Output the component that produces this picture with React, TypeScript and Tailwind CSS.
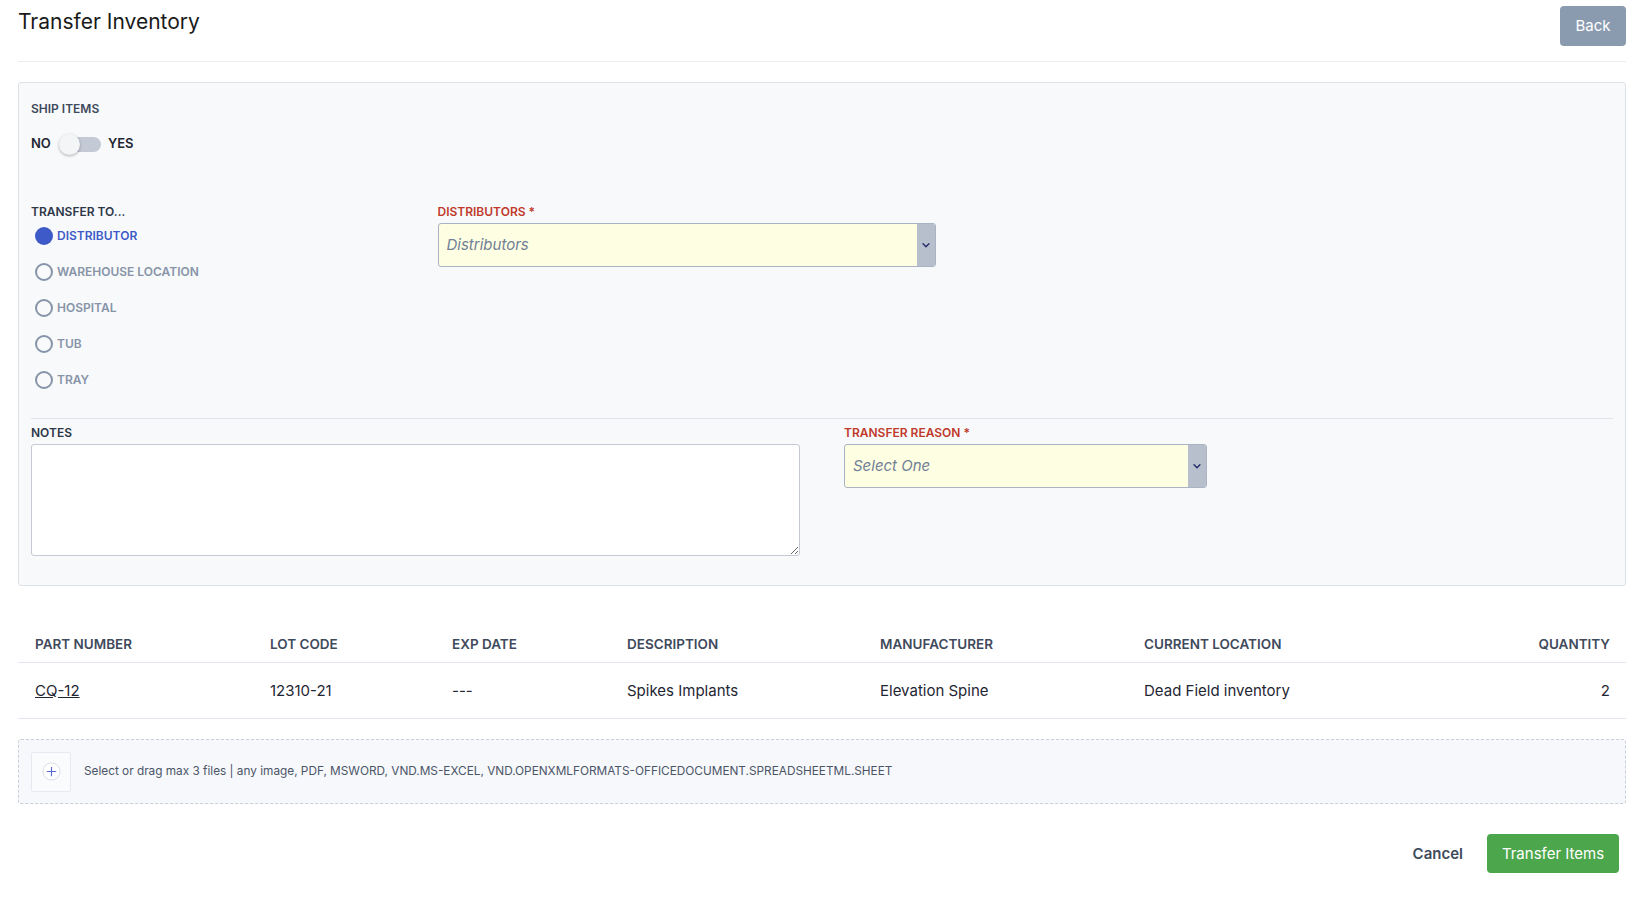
import { useState } from "react";

type Row = {
  part: string;
  lot: string;
  exp: string;
  description: string;
  manufacturer: string;
  location: string;
  quantity: number;
};

const rows: Row[] = [
  {
    part: "CQ-12",
    lot: "12310-21",
    exp: "---",
    description: "Spikes Implants",
    manufacturer: "Elevation Spine",
    location: "Dead Field inventory",
    quantity: 2,
  },
];

const destinations = ["DISTRIBUTOR", "WAREHOUSE LOCATION", "HOSPITAL", "TUB", "TRAY"];

function ChevronDown() {
  return (
    <svg className="h-[10px] w-[10px]" viewBox="0 0 24 24" fill="none" stroke="currentColor" strokeWidth="3.5" strokeLinecap="round" strokeLinejoin="round">
      <path d="M5 9l7 7 7-7" />
    </svg>
  );
}

function PlusCircle() {
  return (
    <svg className="h-[19px] w-[19px]" viewBox="0 0 20 20" fill="none">
      <circle cx="10" cy="10" r="9" fill="#ffffff" stroke="#d7dbe6" strokeWidth="1" />
      <path d="M10 5.5v9M5.5 10h9" stroke="#5a67d8" strokeWidth="1.2" strokeLinecap="round" />
    </svg>
  );
}

function SelectBox({ placeholder, width }: { placeholder: string; width: string }) {
  return (
    <div className={`flex h-[44px] ${width} overflow-hidden rounded-[3px] border border-[#a9b3c4] bg-[#fefee2]`}>
      <div className="flex flex-1 items-center px-[8px] text-[15px] italic text-[#718096]">{placeholder}</div>
      <div className="flex w-[18px] items-center justify-center bg-[#b7becc] text-[#27306b]">
        <ChevronDown />
      </div>
    </div>
  );
}

const th = "px-[17px] pb-[8px] text-left text-[13.5px] font-semibold text-[#3f4a5c]";

export default function App() {
  const [ship, setShip] = useState(false);
  const [dest, setDest] = useState("DISTRIBUTOR");

  return (
    <div className="min-h-screen bg-white px-[18px] font-['Inter',sans-serif] text-[#1a202c]">
      {/* Header */}
      <div className="flex items-start justify-between border-b border-[#ebedf0] pb-[15px] pt-[6px]">
        <h1 className="mt-[2px] text-[21px] font-normal leading-[28px] text-[#1a1a1a]">Transfer Inventory</h1>
        <button type="button" className="h-[40px] w-[66px] rounded-[4px] bg-[#8a9bb0] text-[15px] text-white">
          Back
        </button>
      </div>

      {/* Form card */}
      <div className="mt-[20px] rounded-[3px] border border-[#dde1e8] bg-[#f8f9fb] px-[12px] pb-[29px] pt-[18px]">
        <div className="text-[12px] font-semibold leading-[16px] text-[#3f4a5c]">SHIP ITEMS</div>
        <div className="mt-[16px] flex h-[22px] items-center text-[13px] font-semibold text-[#1f2633]">
          <span>NO</span>
          <button
            type="button"
            onClick={() => setShip(!ship)}
            className="relative ml-[10px] mr-[7px] h-[15px] w-[40px] rounded-full bg-[#c3c9d5]"
          >
            <span
              className={`absolute top-[-3px] h-[21px] w-[21px] rounded-full bg-[#f4f5f7] shadow-[0_1px_3px_rgba(0,0,0,0.3)] ${
                ship ? "left-[21px]" : "left-[-2px]"
              }`}
            />
          </button>
          <span>YES</span>
        </div>

        <div className="mt-[49px] grid grid-cols-4 gap-x-[44px]">
          <div>
            <div className="text-[12px] font-semibold leading-[16px] text-[#2d3748]">TRANSFER TO...</div>
            <div className="mt-[7px] flex flex-col gap-[18px]">
              {destinations.map((d) => (
                <button
                  type="button"
                  key={d}
                  onClick={() => setDest(d)}
                  className="flex h-[18px] items-center gap-[4px] pl-[4px] text-left"
                >
                  {dest === d ? (
                    <span className="h-[18px] w-[18px] rounded-full bg-[#3d5ac8]" />
                  ) : (
                    <span className="h-[18px] w-[18px] rounded-full border-2 border-[#8794a8]" />
                  )}
                  <span className={`text-[12px] font-semibold ${dest === d ? "text-[#3d5ac8]" : "text-[#8794a8]"}`}>
                    {d}
                  </span>
                </button>
              ))}
            </div>
          </div>
          <div className="col-span-3">
            <div className="text-[12px] font-semibold leading-[16px] text-[#c0392b]">DISTRIBUTORS *</div>
            <div className="mt-[3px]">
              <SelectBox placeholder="Distributors" width="w-[498px]" />
            </div>
          </div>
        </div>

        <div className="mt-[29px] border-t border-[#e1e5ec] pt-[6px]">
          <div className="grid grid-cols-4 gap-x-[44px]">
            <div className="col-span-2">
              <div className="text-[12px] font-semibold leading-[16px] text-[#2d3748]">NOTES</div>
              <textarea className="mt-[3px] block h-[112px] w-full rounded-[3px] border border-[#c4c9d3] bg-white" />
            </div>
            <div>
              <div className="text-[12px] font-semibold leading-[16px] text-[#c0392b]">TRANSFER REASON *</div>
              <div className="mt-[3px]">
                <SelectBox placeholder="Select One" width="w-full" />
              </div>
            </div>
          </div>
        </div>
      </div>

      {/* Items table */}
      <table className="mt-[48px] w-full border-collapse">
        <thead>
          <tr className="border-b border-[#e2e6ee]">
            <th className={`w-[235px] ${th}`}>PART NUMBER</th>
            <th className={`w-[182px] ${th}`}>LOT CODE</th>
            <th className={`w-[175px] ${th}`}>EXP DATE</th>
            <th className={`w-[253px] ${th}`}>DESCRIPTION</th>
            <th className={`w-[264px] ${th}`}>MANUFACTURER</th>
            <th className={th}>CURRENT LOCATION</th>
            <th className="px-[16px] pb-[8px] text-right text-[13.5px] font-semibold text-[#3f4a5c]">QUANTITY</th>
          </tr>
        </thead>
        <tbody>
          {rows.map((r) => (
            <tr key={r.part} className="border-b border-[#e2e6ee] text-[15px] text-[#1f2633]">
              <td className="h-[56px] px-[17px]">
                <a href="#" className="underline">{r.part}</a>
              </td>
              <td className="px-[17px]">{r.lot}</td>
              <td className="px-[17px]">{r.exp}</td>
              <td className="px-[17px]">{r.description}</td>
              <td className="px-[17px]">{r.manufacturer}</td>
              <td className="px-[17px]">{r.location}</td>
              <td className="px-[16px] text-right">{r.quantity}</td>
            </tr>
          ))}
        </tbody>
      </table>

      {/* File drop zone */}
      <div className="mt-[20px] flex h-[65px] items-center gap-[13px] rounded-[3px] border border-dashed border-[#c9cfda] bg-[#f7f8fb] px-[12px]">
        <div className="flex h-[40px] w-[40px] items-center justify-center rounded-[2px] border border-[#e6e9ef] bg-[#fafbfd]">
          <PlusCircle />
        </div>
        <span className="text-[11.8px] text-[#4a5568]">
          Select or drag max 3 files | any image, PDF, MSWORD, VND.MS-EXCEL, VND.OPENXMLFORMATS-OFFICEDOCUMENT.SPREADSHEETML.SHEET
        </span>
      </div>

      {/* Actions */}
      <div className="mt-[30px] flex items-center justify-end gap-[24px] pr-[7px]">
        <button type="button" className="text-[15px] font-semibold text-[#3f4a5c]">Cancel</button>
        <button type="button" className="h-[39px] w-[132px] rounded-[4px] bg-[#4ca64c] text-[15px] text-white">
          Transfer Items
        </button>
      </div>
    </div>
  );
}
